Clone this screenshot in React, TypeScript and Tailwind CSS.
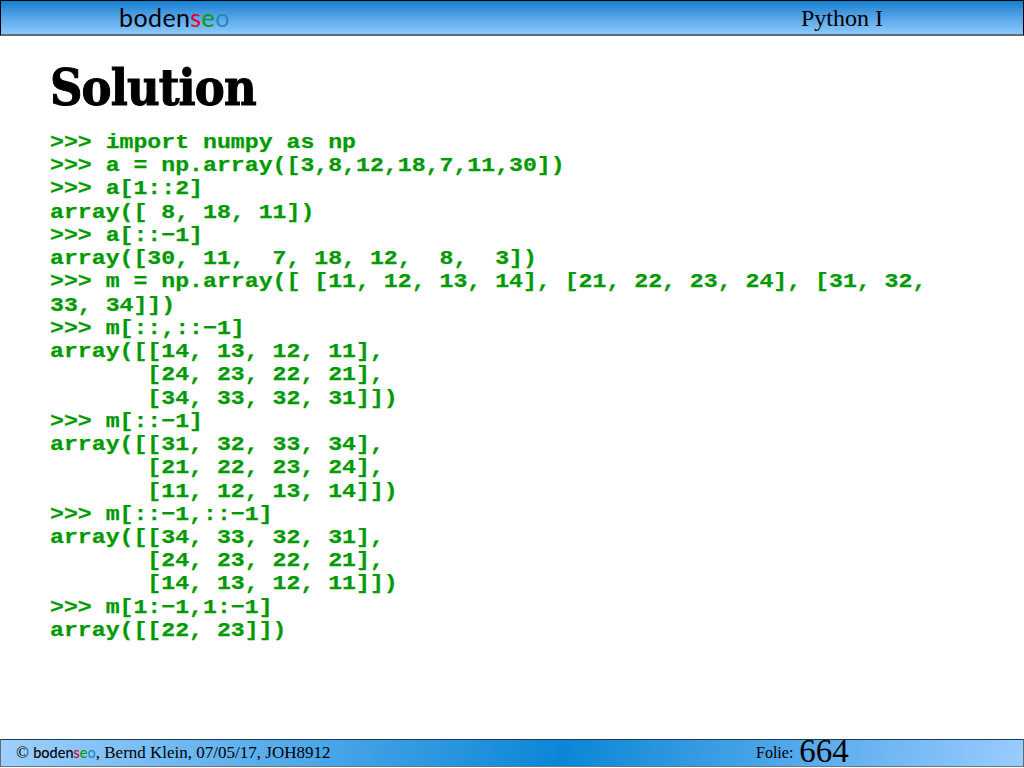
const code = `>>> import numpy as np
>>> a = np.array([3,8,12,18,7,11,30])
>>> a[1::2]
array([ 8, 18, 11])
>>> a[::−1]
array([30, 11,  7, 18, 12,  8,  3])
>>> m = np.array([ [11, 12, 13, 14], [21, 22, 23, 24], [31, 32,
33, 34]])
>>> m[::,::−1]
array([[14, 13, 12, 11],
       [24, 23, 22, 21],
       [34, 33, 32, 31]])
>>> m[::−1]
array([[31, 32, 33, 34],
       [21, 22, 23, 24],
       [11, 12, 13, 14]])
>>> m[::−1,::−1]
array([[34, 33, 32, 31],
       [24, 23, 22, 21],
       [14, 13, 12, 11]])
>>> m[1:−1,1:−1]
array([[22, 23]])`;

function Logo({ className }: { className: string }) {
  return (
    <span className={className}>
      boden<span className="text-[#e0001b]">s</span>
      <span className="text-[#0a9a0a]">e</span>
      <span className="text-[#2a84c0]">o</span>
    </span>
  );
}

export default function App() {
  return (
    <div className="flex h-[768px] w-[1024px] flex-col overflow-hidden bg-white">
      <header className="flex h-9 items-center border-x border-t border-b-2 border-x-black border-t-black border-b-[#5f6b75] bg-gradient-to-b from-[#0b7fd0] to-[#8bcafd]">
        <Logo className="ml-[118px] w-[682px] font-['Lato'] text-[25px] leading-none font-normal tracking-[0.4px] text-black" />
        <span className="font-['Liberation_Serif'] text-[24px] leading-none text-black">Python I</span>
      </header>

      <main className="flex-1 pl-[50px]">
        <h1 className="mt-[24px] font-['DejaVu_Serif_Condensed','DejaVu_Serif',serif] text-[50px] leading-[56px] font-bold tracking-[-0.9px] text-black [-webkit-text-stroke:1px_black]">Solution</h1>
        <pre className="mt-[15px] origin-left scale-x-[1.159] font-['Liberation_Mono'] text-[20px] leading-[23.24px] font-bold text-[#009900] [-webkit-text-stroke:0.25px_#009900]">{code}</pre>
      </main>

      <footer className="mb-px flex h-7 items-center border border-t-[#1d3a52] border-r-[#5f6b75] border-b-[#6b7680] border-l-[#5f6b75] bg-[linear-gradient(100deg,#9fd0ff_0%,#0b86d6_55%,#9accff_100%)] pl-[15px]">
        <span className="w-[740px] font-['Liberation_Serif'] text-[17px] text-black">
          © <Logo className="font-['Lato'] text-[14.5px] font-medium" />, Bernd Klein, 07/05/17, JOH8912
        </span>
        <span className="font-['Liberation_Serif'] text-[16px] text-black">Folie: </span>
        <span className="ml-[6px] -translate-y-[2px] font-['Liberation_Serif'] text-[33px] leading-none text-black">664</span>
      </footer>
    </div>
  );
}
